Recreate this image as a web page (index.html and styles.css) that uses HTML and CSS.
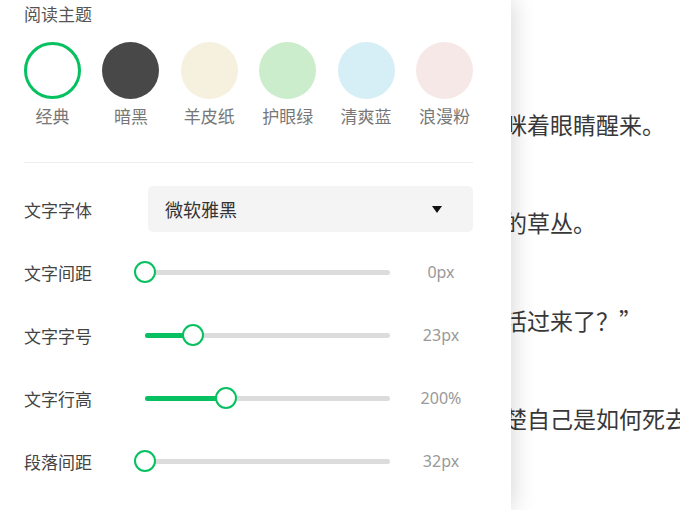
FILE: index.html
```html
<!DOCTYPE html>
<html lang="zh-CN">
<head>
<meta charset="utf-8">
<title>阅读设置</title>
<link rel="stylesheet" href="styles.css">
</head>
<body>
<main class="reader">
  <p>他躺在冰冷的地面上，眯着眼睛醒来。</p>
  <p>他发现自己身处于茂密的草丛。</p>
  <p>“你小子竟然还真的又活过来了？”</p>
  <p>他到现在也依然想不清楚自己是如何死去的。</p>
</main>

<aside class="panel">
  <h2 class="title">阅读主题</h2>
  <ul class="themes">
    <li class="theme"><span class="swatch classic active"></span><span class="tname">经典</span></li>
    <li class="theme"><span class="swatch dark"></span><span class="tname">暗黑</span></li>
    <li class="theme"><span class="swatch parchment"></span><span class="tname">羊皮纸</span></li>
    <li class="theme"><span class="swatch eye"></span><span class="tname">护眼绿</span></li>
    <li class="theme"><span class="swatch blue"></span><span class="tname">清爽蓝</span></li>
    <li class="theme"><span class="swatch pink"></span><span class="tname">浪漫粉</span></li>
  </ul>
  <hr class="divider">
  <div class="settings">
    <div class="row font-row">
      <span class="label">文字字体</span>
      <div class="select"><span>微软雅黑</span><i class="caret"></i></div>
    </div>
    <div class="row slider-row">
      <span class="label">文字间距</span>
      <div class="slider"><div class="track"><div class="fill" style="width:0%"></div><span class="knob" style="left:0%"></span></div></div>
      <span class="value">0px</span>
    </div>
    <div class="row slider-row">
      <span class="label">文字字号</span>
      <div class="slider"><div class="track"><div class="fill" style="width:19.6%"></div><span class="knob" style="left:19.6%"></span></div></div>
      <span class="value">23px</span>
    </div>
    <div class="row slider-row">
      <span class="label">文字行高</span>
      <div class="slider"><div class="track"><div class="fill" style="width:33%"></div><span class="knob" style="left:33%"></span></div></div>
      <span class="value">200%</span>
    </div>
    <div class="row slider-row">
      <span class="label">段落间距</span>
      <div class="slider"><div class="track"><div class="fill" style="width:0%"></div><span class="knob" style="left:0%"></span></div></div>
      <span class="value">32px</span>
    </div>
  </div>
</aside>
</body>
</html>
```

FILE: styles.css
```css
* { box-sizing: border-box; }
html, body {
  margin: 0;
  padding: 0;
  width: 680px;
  height: 510px;
  overflow: hidden;
  background: #ffffff;
  font-family: "Noto Sans", "Noto Sans CJK SC", sans-serif;
}

.reader {
  padding: 101px 0 0 274px;
}
.reader p {
  margin: 0 0 52px 0;
  font-family: "Noto Sans CJK SC", sans-serif;
  font-size: 23px;
  line-height: 46px;
  color: #383838;
  white-space: nowrap;
}

.panel {
  position: absolute;
  top: 0;
  left: 0;
  bottom: 0;
  width: 511px;
  padding: 4px 38px 0 24px;
  background: #ffffff;
  box-shadow: 2px 0 22px rgba(0, 0, 0, 0.16);
}

.title {
  margin: 0;
  font-size: 17px;
  line-height: 22px;
  font-weight: normal;
  color: #555555;
}

.themes {
  list-style: none;
  margin: 16px 0 0 0;
  padding: 0;
  display: flex;
  justify-content: space-between;
}
.theme {
  width: 57px;
  display: flex;
  flex-direction: column;
  align-items: center;
}
.swatch {
  display: block;
  width: 57px;
  height: 57px;
  border-radius: 50%;
}
.swatch.classic { background: #ffffff; border: 3px solid #07c160; }
.swatch.dark { background: #474847; }
.swatch.parchment { background: #f6f0df; }
.swatch.eye { background: #ccedcc; }
.swatch.blue { background: #d6eef6; }
.swatch.pink { background: #f7e8e8; }
.tname {
  margin-top: 8px;
  font-size: 17px;
  line-height: 20px;
  color: #777777;
  white-space: nowrap;
}

.divider {
  margin: 35px 0 0 0;
  border: 0;
  height: 1px;
  background: #eeeeee;
}

.settings {
  margin-top: 23px;
  display: flex;
  flex-direction: column;
  gap: 17px;
}
.row {
  height: 46px;
  display: flex;
  align-items: center;
}
.label {
  font-size: 17px;
  color: #444444;
  white-space: nowrap;
}
.font-row .label { width: 124px; }
.slider-row .label { width: 110px; }

.select {
  flex: 1;
  height: 46px;
  background: #f4f4f4;
  border-radius: 5px;
  display: flex;
  align-items: center;
  justify-content: space-between;
  padding: 0 31px 0 17px;
  font-size: 18px;
  color: #333333;
}
.caret {
  width: 0;
  height: 0;
  border-left: 5.5px solid transparent;
  border-right: 5.5px solid transparent;
  border-top: 7px solid #111111;
}

.slider {
  flex: 1;
  padding: 0 19px 0 11px;
}
.track {
  position: relative;
  height: 5px;
  border-radius: 3px;
  background: #dcdcdc;
}
.fill {
  height: 5px;
  border-radius: 3px;
  background: #07c160;
}
.knob {
  position: absolute;
  top: 50%;
  width: 22px;
  height: 22px;
  border-radius: 50%;
  background: #ffffff;
  border: 2px solid #07c160;
  transform: translate(-50%, -50%);
}
.value {
  width: 64px;
  text-align: center;
  font-size: 16px;
  color: #999999;
}
```
